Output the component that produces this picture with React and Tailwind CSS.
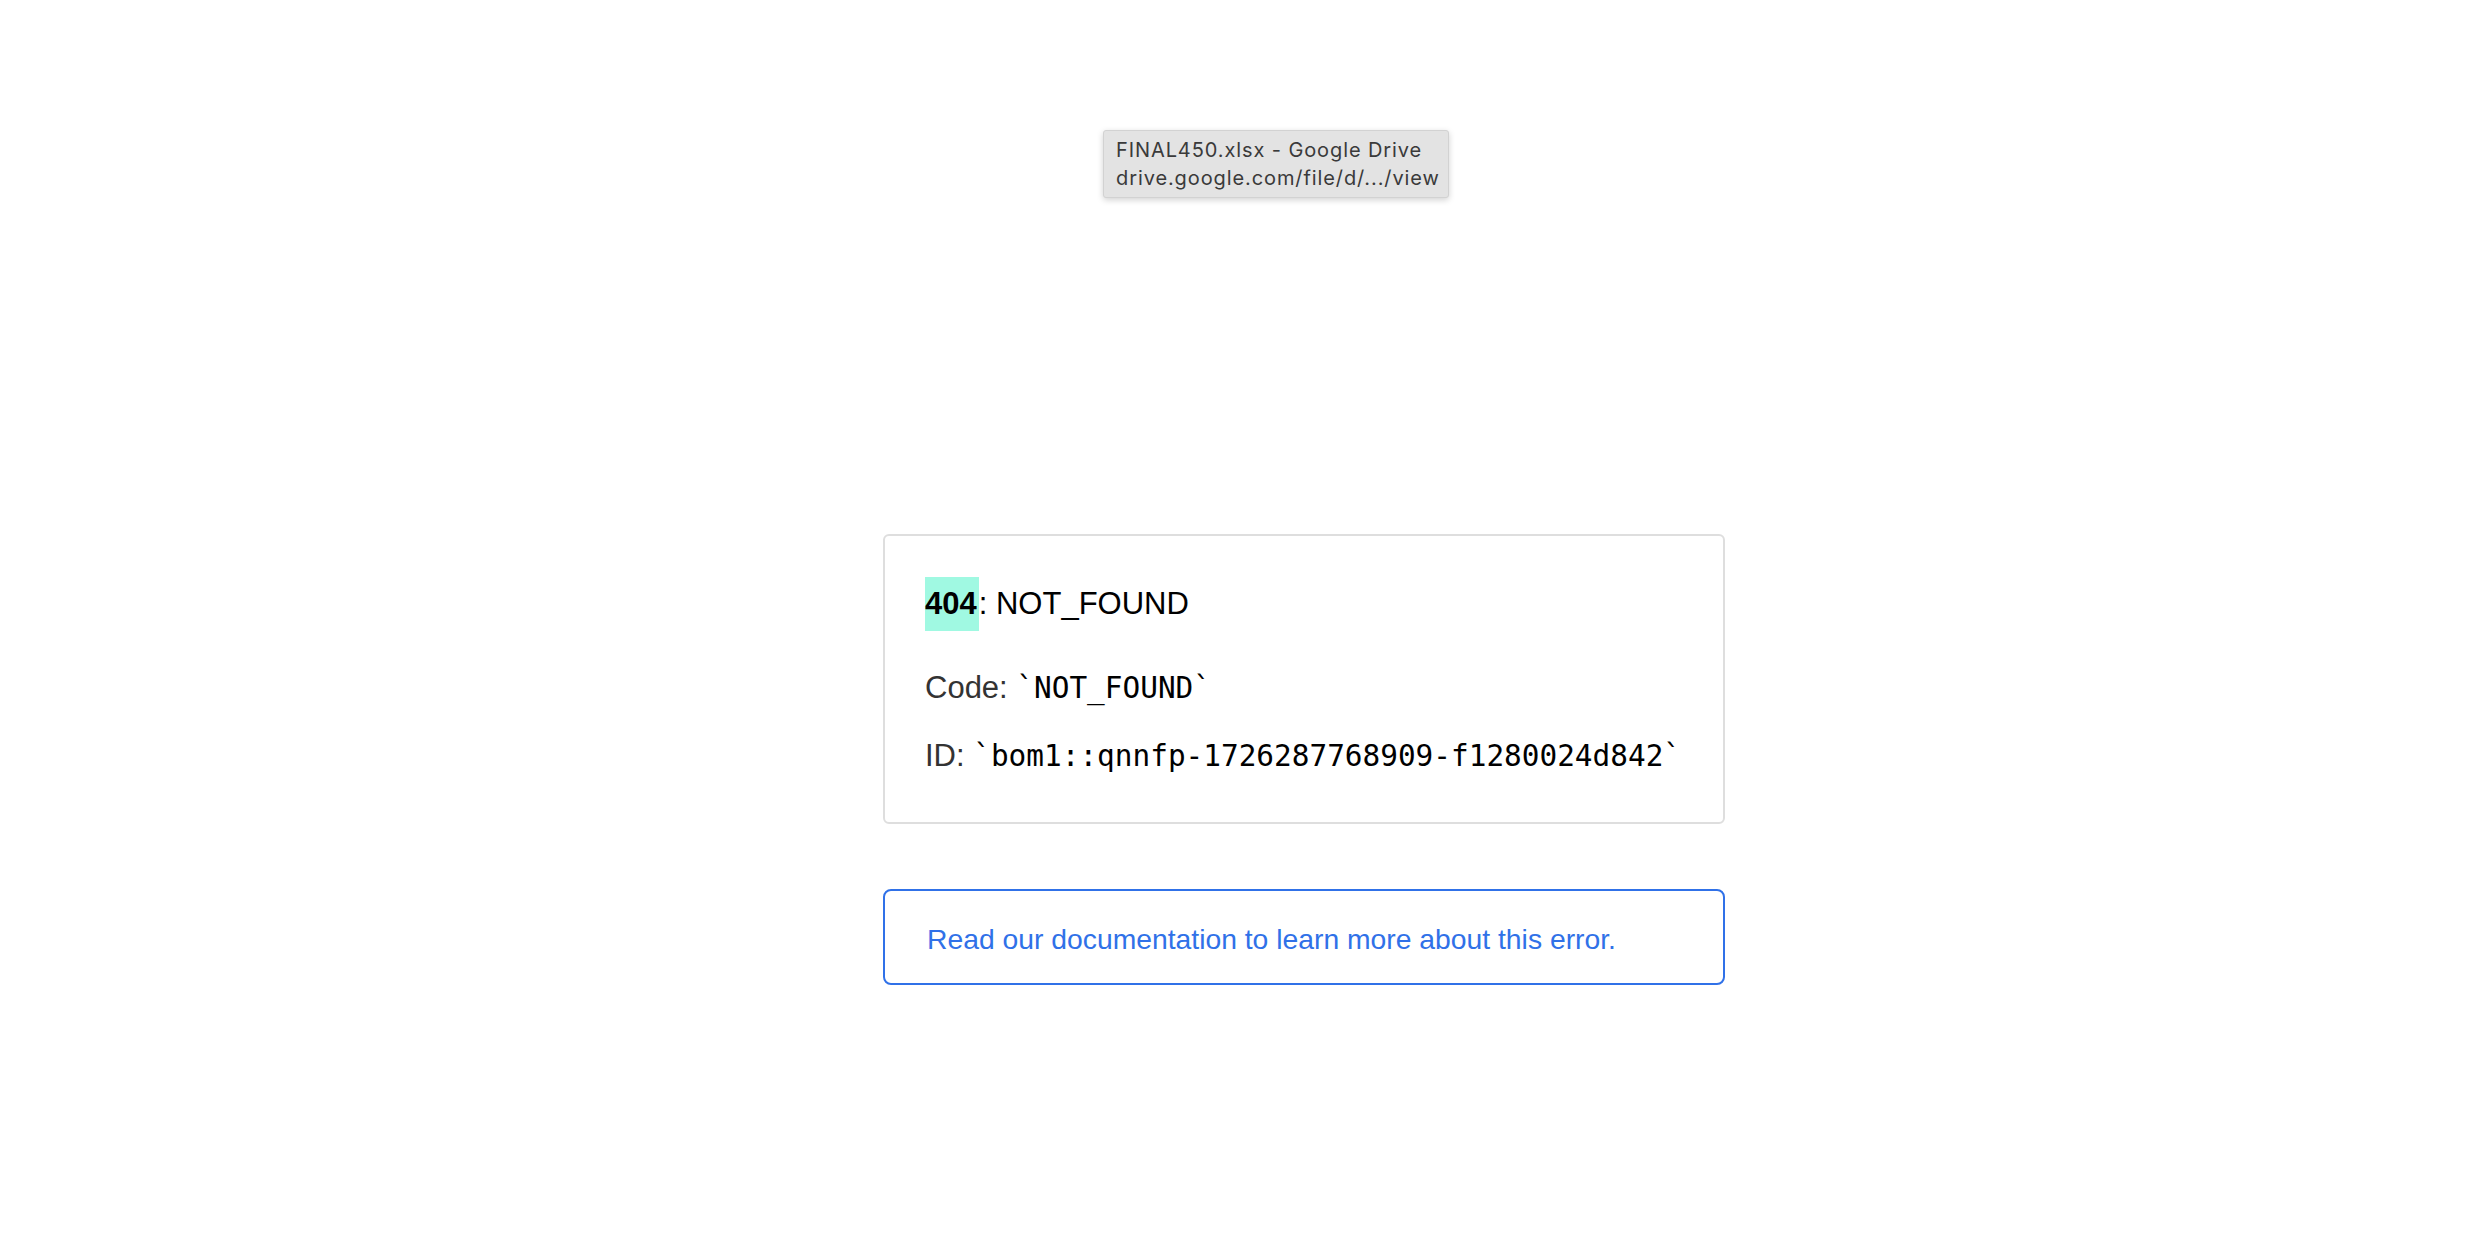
import React from 'react';

const sans = { fontFamily: '"Liberation Sans", Arial, sans-serif' };

function Tooltip() {
  return (
    <div className="absolute left-[1103px] top-[130px] w-[346px] h-[68px] bg-[#e3e3e3] border border-[#d2d2d2] rounded-[3px] shadow-[0_2px_6px_rgba(0,0,0,0.18)] pl-[12px] pt-[5px] text-[20px] tracking-[0.9px] leading-[28px] text-[#3a3a3a] whitespace-nowrap font-['Inter',sans-serif]">
      <div>FINAL450.xlsx - Google Drive</div>
      <div>drive.google.com/file/d/.../view</div>
    </div>
  );
}

export default function App() {
  return (
    <div className="relative min-h-screen w-full bg-white font-['Liberation_Sans',Arial,sans-serif]">
      <Tooltip />
      <main className="pt-[534px] pl-[883px]">
        <div className="w-[842px]">
          <section className="border-2 border-[#dedede] rounded-[6px] pl-[40px] pr-[20px] pt-[41px] pb-[44px]">
            <h1 className="h-[54px] text-[31px] leading-[54px] font-normal text-black">
              <span className="inline-block bg-[#a0f9e2] font-bold leading-[54px] pr-[2px]">404</span>: NOT_FOUND
            </h1>
            <p className="mt-[35px] text-[31px] leading-[44px] text-[#333333] whitespace-nowrap">
              Code: <code className="font-['DejaVu_Sans_Mono',monospace] text-[29.4px] text-black">`NOT_FOUND`</code>
            </p>
            <p className="mt-[24px] text-[31px] leading-[44px] text-[#333333] whitespace-nowrap">
              ID: <code className="font-['DejaVu_Sans_Mono',monospace] text-[29.4px] text-black">`bom1::qnnfp-1726287768909-f1280024d842`</code>
            </p>
          </section>
          <a
            href="#"
            className="mt-[65px] block border-2 border-[#3071e8] rounded-[8px] pl-[42px] pt-[31px] pb-[27px] text-[28.3px] leading-[34px] text-[#3071e8] no-underline"
            style={sans}
          >
            Read our documentation to learn more about this error.
          </a>
        </div>
      </main>
    </div>
  );
}
